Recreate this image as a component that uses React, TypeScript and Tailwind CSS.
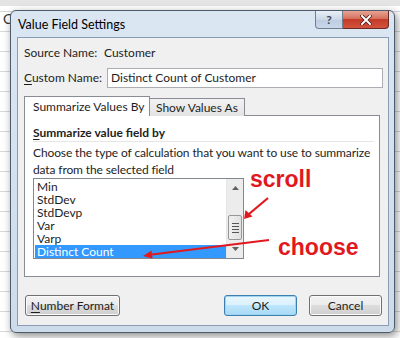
import React from "react";

const items = ["Min", "StdDev", "StdDevp", "Var", "Varp", "Distinct Count"];

function WinButton({ children, def, className }: { children: React.ReactNode; def?: boolean; className?: string }) {
  return (
    <div
      className={
        "h-[21px] flex items-center justify-center rounded-[3px] border text-[12px] text-[#1e1e1e] whitespace-nowrap " +
        (def
          ? "border-[#3c7fb1] bg-[linear-gradient(#eaf6fd,#d9f0fc_50%,#bee6fd_50%,#a7d9f5)] shadow-[inset_0_0_0_1px_#9fd5f2] "
          : "border-[#707070] bg-[linear-gradient(#f2f2f2,#ebebeb_50%,#dddddd_50%,#cfcfcf)] shadow-[inset_0_0_0_1px_#fbfbfb] ") +
        (className ?? "")
      }
    >
      {children}
    </div>
  );
}

export default function App() {
  return (
    <div className="relative w-[400px] h-[338px] overflow-hidden bg-white whitespace-nowrap font-['Lato','Liberation_Sans',sans-serif] bg-[linear-gradient(#d8d8d8_1px,transparent_1px)] bg-[size:100%_20px] bg-[position:0_11px]">
      <div className="absolute left-0 top-0 w-full h-[6px] bg-[#e4e4e4]" />
      <div className="absolute left-[3px] top-[12px] text-[14px] text-[#333] leading-none">C</div>
      <div className="relative pt-[10px] pl-[10px]">
        {/* dialog frame */}
        <div className="w-[385px] h-[323px] rounded-[6px] border border-[#4d5b6b] bg-[linear-gradient(#dbe6f3,#cddbeb)] shadow-[2px_3px_8px_rgba(0,0,0,0.45)] flex flex-col">
          {/* title bar */}
          <div className="h-[26px] flex items-start shrink-0">
            <div className="pl-[7px] pt-[6px] text-[12.5px] leading-[16px] text-black">Value Field Settings</div>
            <div className="ml-auto mr-[5px] flex">
              <div className="w-[28px] h-[18px] rounded-bl-[4px] border border-t-0 border-[#6f7f91] bg-[linear-gradient(#e9eff7,#cbd8e8_50%,#bccbe0_50%,#c9d7ea)] flex items-center justify-center text-[12px] font-bold text-[#3b4858] leading-none">
                ?
              </div>
              <div className="w-[46px] h-[18px] rounded-br-[4px] border border-t-0 border-l-0 border-[#6b2a24] bg-[linear-gradient(#e8a493,#d4705c_45%,#c43b28_50%,#d3523c)] flex items-center justify-center">
                <svg width="12" height="10" viewBox="0 0 12 10">
                  <path d="M2 1 L10 9 M10 1 L2 9" stroke="#4a1a14" strokeWidth="3.6" strokeLinecap="square" />
                  <path d="M2 1 L10 9 M10 1 L2 9" stroke="#ffffff" strokeWidth="2" strokeLinecap="square" />
                </svg>
              </div>
            </div>
          </div>
          {/* inner client area */}
          <div className="ml-[6px] mr-[5px] mb-[6px] flex-1 border border-[#8a9cb2] bg-[#f0f0f0] pl-[6px] pr-[5px] flex flex-col text-[12px] text-[#1e1e1e]">
            <div className="mt-[7px] h-[16px] flex items-center">
              <span className="w-[80px]">Source Name:</span>
              <span>Customer</span>
            </div>
            <div className="mt-[7px] flex items-center">
              <span className="w-[83px]">
                <u className="underline-offset-2">C</u>ustom Name:
              </span>
              <div className="flex-1 h-[20px] border border-[#abadb3] bg-white flex items-center pl-[3px]">
                Distinct Count of Customer
              </div>
            </div>
            {/* tabs */}
            <div className="mt-[8px] w-[356px] flex items-end h-[20px] relative z-10">
              <div className="w-[126px] h-[20px] border border-b-0 border-[#898c95] bg-white flex items-center pl-[8px]">
                Summarize Values By
              </div>
              <div className="w-[95px] h-[18px] border border-l-0 border-b-0 border-[#898c95] bg-[linear-gradient(#f2f2f2,#e3e3e3)] flex items-center pl-[6px]">
                Show Values As
              </div>
            </div>
            <div className="w-[356px] h-[162px] -mt-[1px] border border-[#898c95] bg-white pl-[8px] pr-[5px] flex flex-col">
              <div className="mt-[9px] h-[16px] flex items-center font-bold">
                <span>
                  <u className="underline-offset-2">S</u>ummarize value field by
                </span>
              </div>
              <div className="h-[1px] bg-[#e6e6e6]" />
              <div className="mt-[2px] leading-[17px] tracking-[-0.12px]">
                Choose the type of calculation that you want to use to summarize
                <br />
                data from the selected field
              </div>
              <div className="w-[211px] h-[81px] border border-[#828790] bg-white flex overflow-hidden">
                <div className="flex-1 pt-[1px] pl-[1px]">
                  {items.map((it, i) => (
                    <div
                      key={it}
                      className={
                        "h-[13px] flex items-center pl-[2px] leading-[13px] " +
                        (i === items.length - 1 ? "bg-[#3399ff] text-white" : "")
                      }
                    >
                      {it}
                    </div>
                  ))}
                </div>
                <div className="w-[17px] bg-[#ececec] border-l border-[#e6e6e6] flex flex-col">
                  <div className="h-[17px] flex items-center justify-center">
                    <svg width="7" height="4" viewBox="0 0 7 4">
                      <path d="M0 4 L3.5 0 L7 4 Z" fill="#606060" />
                    </svg>
                  </div>
                  <div className="h-[19px]" />
                  <div className="mx-[1px] h-[25px] rounded-[2px] border border-[#979797] bg-[linear-gradient(90deg,#f0f0f0,#e0e0e0)] flex flex-col items-center justify-center gap-[2px]">
                    <div className="w-[7px] h-[1px] bg-[#555]" />
                    <div className="w-[7px] h-[1px] bg-[#555]" />
                    <div className="w-[7px] h-[1px] bg-[#555]" />
                    <div className="w-[7px] h-[1px] bg-[#555]" />
                  </div>
                  <div className="h-[17px] flex items-center justify-center">
                    <svg width="7" height="4" viewBox="0 0 7 4">
                      <path d="M0 0 L3.5 4 L7 0 Z" fill="#606060" />
                    </svg>
                  </div>
                </div>
              </div>
            </div>
            {/* buttons */}
            <div className="mt-[18px] flex">
              <WinButton className="ml-[1px] w-[95px]">
                <span>
                  <u className="underline-offset-2">N</u>umber Format
                </span>
              </WinButton>
              <WinButton def className="ml-[104px] w-[73px]">
                OK
              </WinButton>
              <WinButton className="ml-[12px] w-[73px]">Cancel</WinButton>
            </div>
          </div>
        </div>
      </div>
      {/* annotations */}
      <svg className="absolute left-0 top-0 pointer-events-none" width="400" height="338" viewBox="0 0 400 338">
        <path d="M268 198 L249 214" stroke="#e1191f" strokeWidth="2.2" />
        <path d="M244 219 L245.5 210 L252.5 216.5 Z" fill="#e1191f" />
        <path d="M269 240 L152 254.5" stroke="#e1191f" strokeWidth="2.2" />
        <path d="M143 256 L151.5 250.5 L152.5 258.5 Z" fill="#e1191f" />
      </svg>
      <div className="absolute left-[250px] top-[168px] text-[23px] leading-none font-bold text-[#e1191f] font-['Liberation_Sans',Arial,sans-serif]">
        scroll
      </div>
      <div className="absolute left-[278px] top-[236px] text-[23px] leading-none font-bold text-[#e1191f] font-['Liberation_Sans',Arial,sans-serif]">
        choose
      </div>
    </div>
  );
}
